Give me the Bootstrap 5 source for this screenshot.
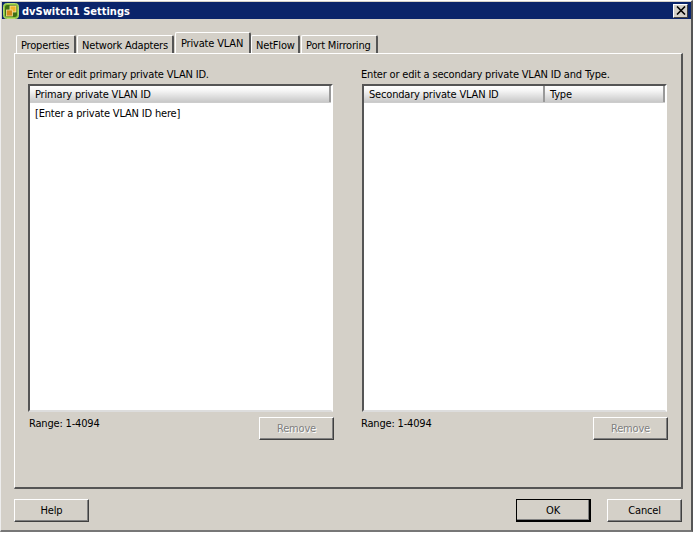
<!DOCTYPE html>
<html lang="en"><head><meta charset="utf-8"><title>dvSwitch1 Settings</title>
<link href="https://cdn.jsdelivr.net/npm/bootstrap@5.3.0/dist/css/bootstrap.min.css" rel="stylesheet">
<style>
html,body{width:695px;height:533px;overflow:hidden;margin:0}
body{background:#fff;font:11px/13px "DejaVu Sans Condensed","Liberation Sans",sans-serif;letter-spacing:-.18px;color:#000}
.dlg{width:693px;height:532px;background:#d4d0c8;border:solid;border-width:1px 2px 2px 1px;border-color:#fff #555 #777 #eee;margin-right:2px;padding-top:1px}
.ttl{height:17px;background:#0a246a;color:#fff;margin:0 0 0 1px;padding:0 3px 0 1px;font-weight:700;font-size:11px;letter-spacing:0}
.ttx{padding-top:1px;margin-left:-1px}
.xbtn{width:15px;height:14px;background:#d4d0c8;border:1px solid;border-color:#fff #404040 #404040 #fff;padding:0;display:flex;align-items:center;justify-content:center}
.tabsrow{height:34px;padding:14px 0 0 15px;align-items:flex-end}
.tb{height:18px;background:#d4d0c8;border:solid;border-width:1px 2px 0 1px;border-color:#fff #555 #fff #fff;padding:3px 0 0 4px;border-radius:2px 2px 0 0;margin-right:1px;white-space:nowrap}
.tb.on{height:21px;padding:4px 0 0 5px;margin:0;position:relative;z-index:1;border-bottom:0}
.t1{width:60px}.t2{width:97px}.t3{width:76px}.t4{width:49px}.t5{width:77px}
.pane{margin-left:13px;width:669px;height:436px;border:solid;border-width:1px 2px 2px 1px;border-color:#fff #555 #555 #fff;padding:14px 14px 0 12px;gap:28px}
.cl{width:306px}
.lst{height:328px;background:#fff;border:2px solid;border-color:#555 #fff #ddd #555;margin-top:3px;margin-left:1px;width:305px}
.hdrs{height:17px;background:linear-gradient(#fff,#f5f5f5 30%,#c8c8c8);border-bottom:1px solid #ccc}
.hc{padding:2px 0 0 5px;border-right:2px solid #999}
.hc2{flex:0 0 181px}
.btnx{width:75px;height:23px;padding:0;background:#d4d0c8;border:1px solid;border-color:#fff #404040 #404040 #fff;box-shadow:inset -1px -1px 0 #808080;font:inherit;letter-spacing:inherit;color:#000;border-radius:0}
.btnx:disabled{color:#808080;text-shadow:1px 1px 0 #fff;opacity:1}
.btnx.dflt{border:2px solid #000;border-width:1px 2px 2px 1px;outline:0}
.foot{padding:10px 0 0 13px}
.itm{padding:4px 0 0 5px}
.rng{padding:5px 0 0 2px}
.rng0{padding-left:0}
.rmv{margin-top:5px;margin-right:-1px}
.foot2{margin-right:9px}
</style></head><body>
<div class="dlg">
 <div class="ttl d-flex align-items-center justify-content-between">
  <div class="d-flex align-items-center gap-1">
   <svg width="16" height="16" viewBox="0 0 16 16"><rect x="0.500" y="0.500" width="15" height="15" rx="3" fill="#8cc63f" stroke="#b5d96b"/><rect x="2" y="2" width="12" height="12" rx="2" fill="#3f6f14"/><rect x="7" y="3" width="6" height="6" fill="#f0b429" stroke="#ffe9a8" stroke-width=".8"/><rect x="3.500" y="7" width="6" height="6" fill="#d18a1c" stroke="#f6dc98" stroke-width=".8"/></svg>
   <span class="ttx">dvSwitch1 Settings</span>
  </div>
  <button class="xbtn" aria-label="Close"><svg width="10" height="9" viewBox="0 0 10 9"><path d="M1 0.500 9 8.500M9 0.500 1 8.500" stroke="#000" stroke-width="1.600"/></svg></button>
 </div>
 <div class="tabsrow d-flex">
  <div class="tb t1">Properties</div><div class="tb t2">Network Adapters</div><div class="tb on t3">Private VLAN</div><div class="tb t4">NetFlow</div><div class="tb t5">Port Mirroring</div>
 </div>
 <div class="pane d-flex">
  <div class="cl">
   <div>Enter or edit primary private VLAN ID.</div>
   <div class="lst">
    <div class="hdrs d-flex"><div class="hc flex-grow-1">Primary private VLAN ID</div></div>
    <div class="itm">[Enter a private VLAN ID here]</div>
   </div>
   <div class="d-flex justify-content-between"><span class="rng">Range: 1-4094</span><button class="btnx rmv" disabled>Remove</button></div>
  </div>
  <div class="cl">
   <div>Enter or edit a secondary private VLAN ID and Type.</div>
   <div class="lst">
    <div class="hdrs d-flex"><div class="hc hc2">Secondary private VLAN ID</div><div class="hc flex-grow-1">Type</div></div>
   </div>
   <div class="d-flex justify-content-between"><span class="rng rng0">Range: 1-4094</span><button class="btnx rmv" disabled>Remove</button></div>
  </div>
 </div>
 <div class="foot d-flex justify-content-between">
  <button class="btnx">Help</button>
  <div class="d-flex gap-3 foot2"><button class="btnx dflt">OK</button><button class="btnx">Cancel</button></div>
 </div>
</div>
<script src="https://cdn.jsdelivr.net/npm/bootstrap@5.3.0/dist/js/bootstrap.bundle.min.js"></script>
</body></html>
